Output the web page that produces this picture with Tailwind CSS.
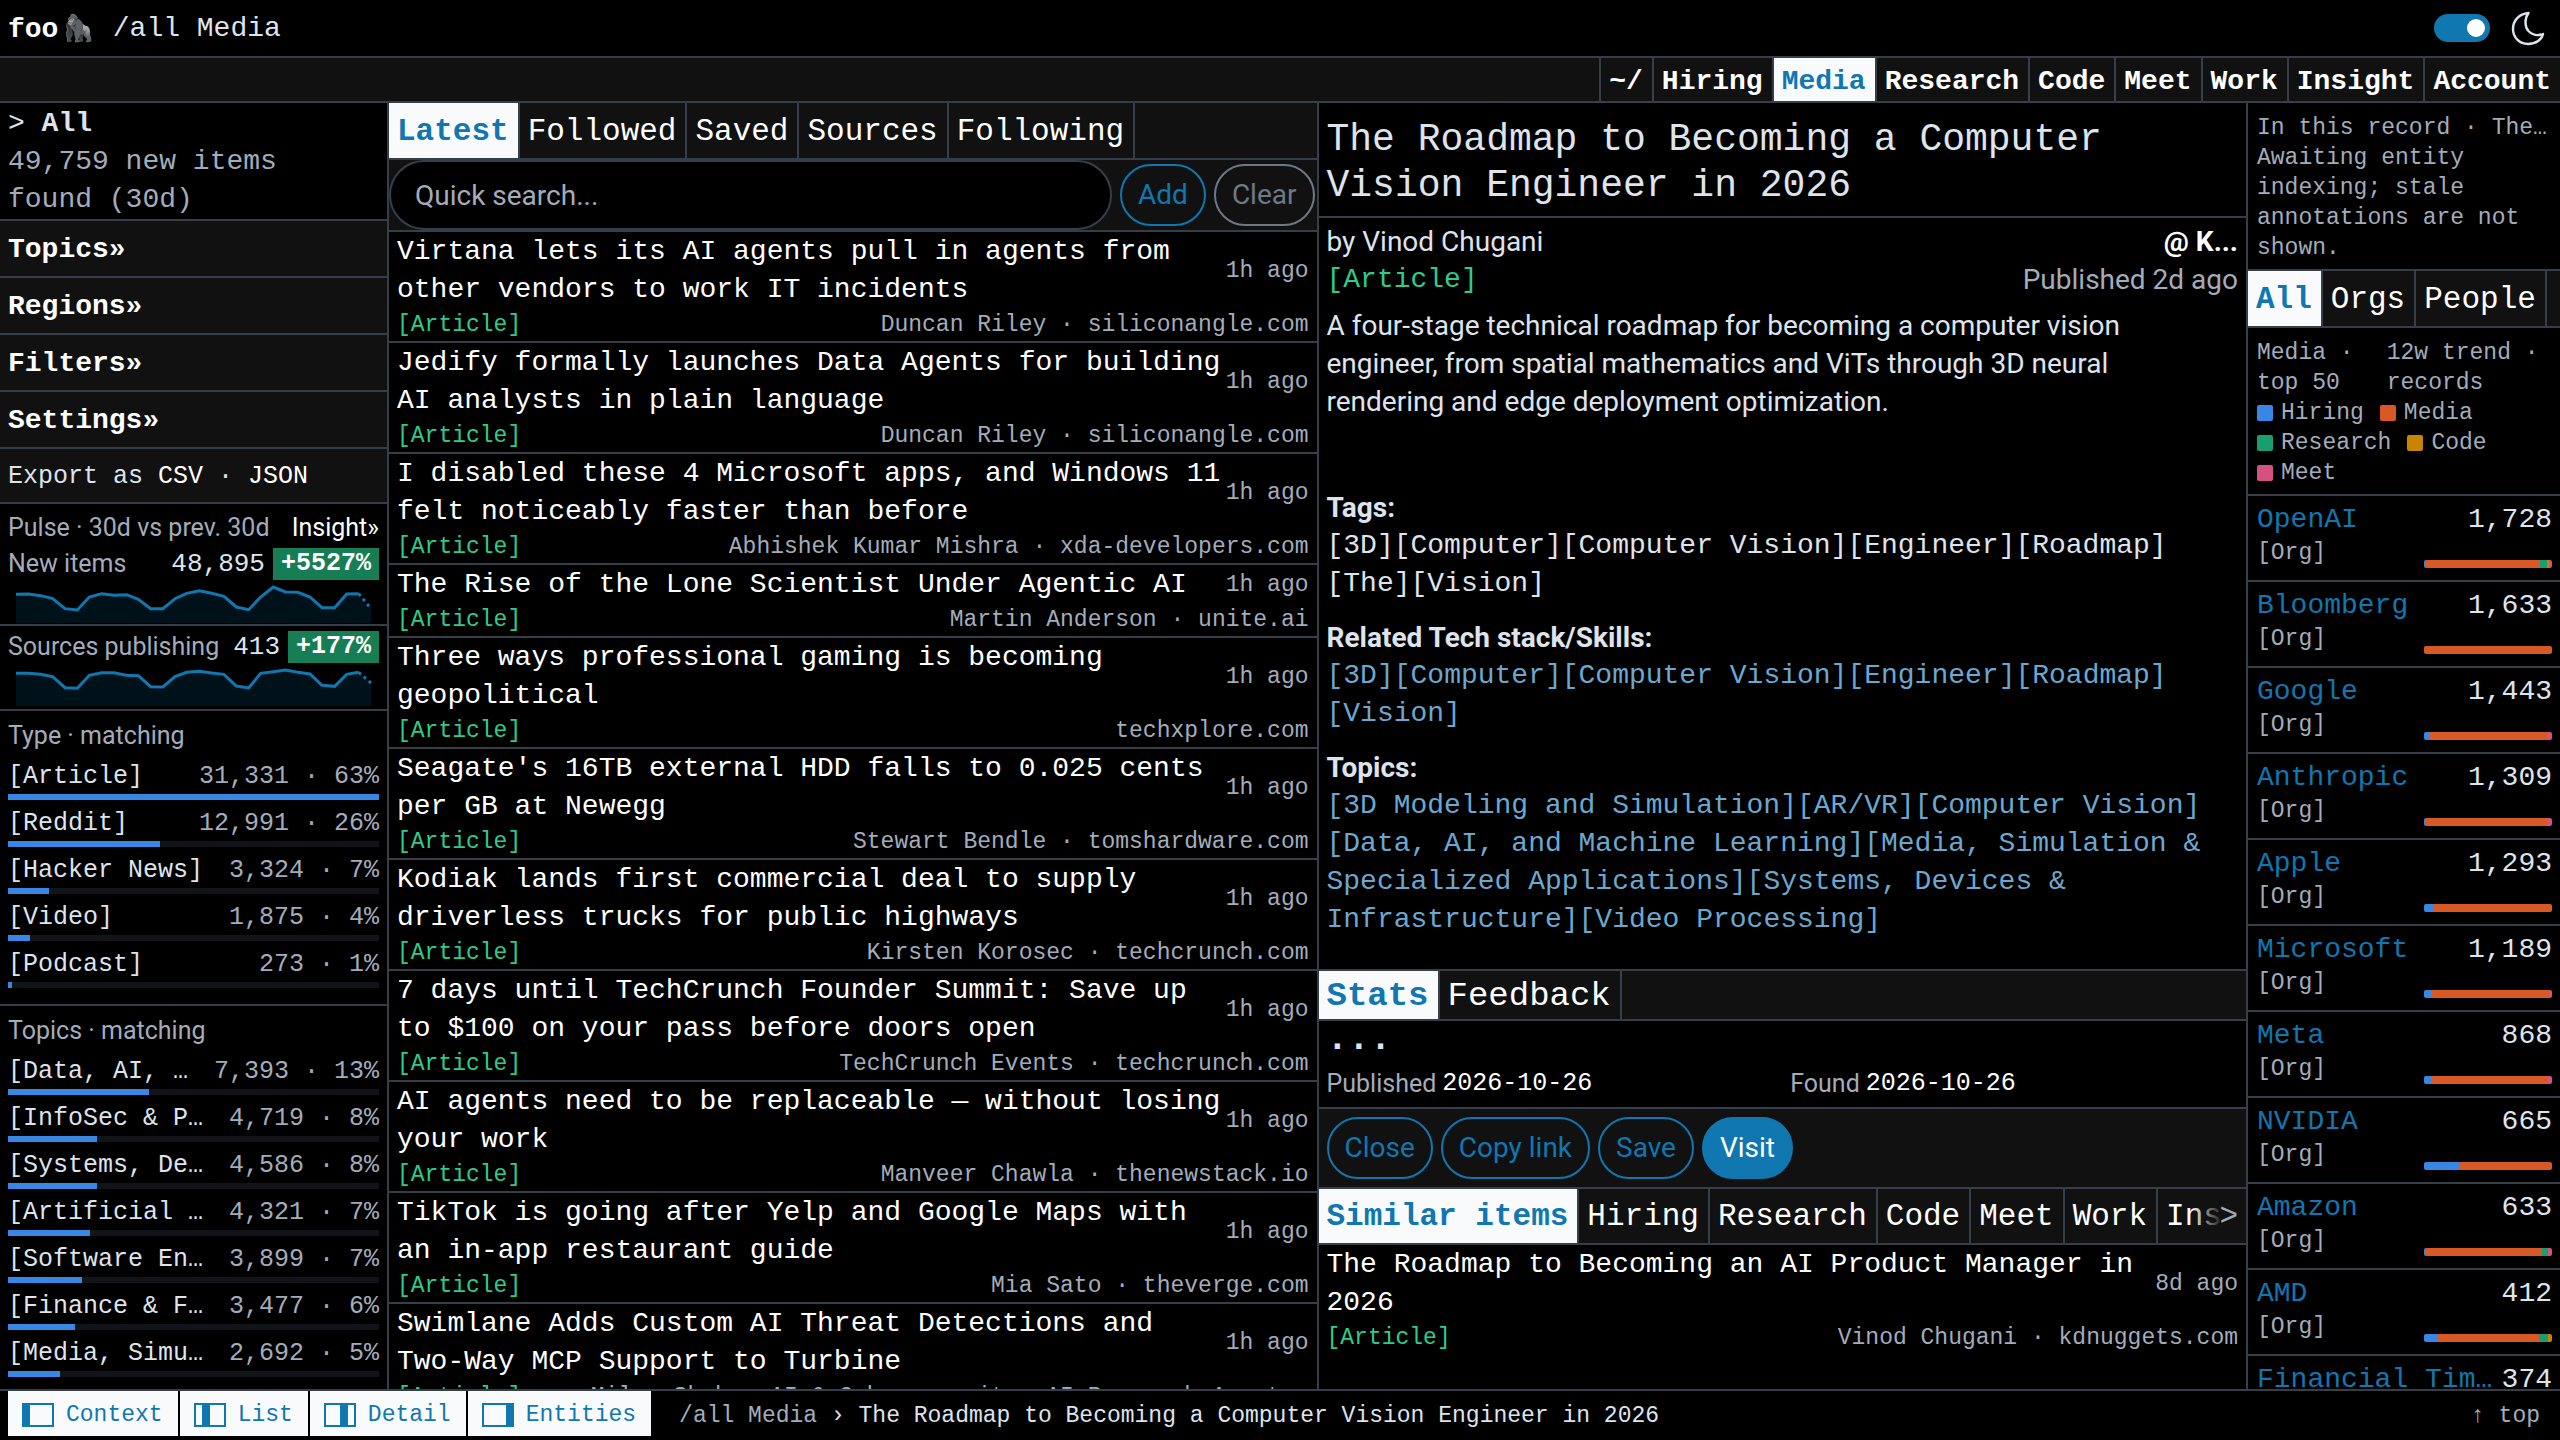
<!DOCTYPE html>
<html lang="en">
<head>
    <meta charset="utf-8">
    <title>foo /all Media</title>
    <script src="https://cdn.jsdelivr.net/npm/@tailwindcss/browser@4"></script>
</head>
<body class="flex h-screen flex-col overflow-hidden bg-black font-['Liberation_Mono',monospace] text-[28px] leading-[38px] text-[#dfe3eb]">

<header class="flex h-[58px] shrink-0 items-center justify-between border-b-2 border-[#363f49] px-2">
    <h1 class="flex items-center gap-[18px] pt-0.5">
        <a href="#" class="font-bold text-white">foo<span class="ml-1 font-['Noto_Color_Emoji',sans-serif] text-[26px]">🦍</span></a>
        <span>/all Media</span>
    </h1>
    <div class="flex items-center gap-5 pr-1.5">
        <input type="checkbox" role="switch" aria-label="Dark mode" checked
               class="flex h-7 w-14 appearance-none items-center justify-end rounded-full bg-[#1077b0] pr-[5px] before:size-[18px] before:rounded-full before:bg-white before:content-['']">
        <svg class="size-9" viewBox="0 0 36 36" fill="none" stroke="#dfe3eb" stroke-width="2.4" stroke-linejoin="round" aria-hidden="true">
            <path d="M18.5 3 C8.5 4 3 11 3 19 C3 27.500 9.500 34 18 34 C26 34 32 29.500 33 24 C28 26 22.500 25 18.500 21 C14.500 16.500 14.500 8.500 18.500 3 Z"/>
        </svg>
    </div>
</header>

<nav class="flex h-[45px] shrink-0 justify-end border-b-2 border-[#363f49] bg-[#111] font-bold leading-[48px] text-white">
    <a href="#" class="border-l-2 border-[#363f49] pl-2 pr-[9px]">~/</a>
    <a href="#" class="border-l-2 border-[#363f49] pl-2 pr-[9px]">Hiring</a>
    <a href="#" class="border-l-2 border-[#363f49] bg-[#f8fafc] pl-2 pr-[9px] text-[#1077b0]">Media</a>
    <a href="#" class="border-l-2 border-[#363f49] pl-2 pr-[9px]">Research</a>
    <a href="#" class="border-l-2 border-[#363f49] pl-2 pr-[9px]">Code</a>
    <a href="#" class="border-l-2 border-[#363f49] pl-2 pr-[9px]">Meet</a>
    <a href="#" class="border-l-2 border-[#363f49] pl-2 pr-[9px]">Work</a>
    <a href="#" class="border-l-2 border-[#363f49] pl-2 pr-[9px]">Insight</a>
    <a href="#" class="border-l-2 border-[#363f49] pl-2 pr-[9px]">Account</a>
</nav>

<main class="grid min-h-0 flex-1 grid-cols-[389px_1fr_1fr_312px]">

    <!-- Context -->
    <aside class="min-w-0 overflow-hidden border-r-2 border-[#363f49]">
        <div class="border-b-2 border-[#363f49] pl-2 pr-6 pt-0.5">
            <p>&gt; <b>All</b></p>
            <p class="text-[#a4acba]">49,759 new items found (30d)</p>
        </div>
        <nav class="bg-[#111] font-bold leading-[52px] text-white">
            <a href="#" class="block border-b-2 border-[#363f49] px-2 pt-[3px]">Topics»</a>
            <a href="#" class="block border-b-2 border-[#363f49] px-2 pt-[3px]">Regions»</a>
            <a href="#" class="block border-b-2 border-[#363f49] px-2 pt-[3px]">Filters»</a>
            <a href="#" class="block border-b-2 border-[#363f49] px-2 pt-[3px]">Settings»</a>
        </nav>
        <p class="border-b-2 border-[#363f49] bg-[#111] px-2 pt-[3px] text-[25px] leading-[50px]">Export as <a href="#" class="text-white">CSV</a> · <a href="#" class="text-white">JSON</a></p>

        <section class="border-b-2 border-[#363f49] px-2 pt-2 text-[25px] leading-8">
            <div class="flex justify-between pb-1">
                <h2 class="font-['Roboto',sans-serif] text-[#a4acba]">Pulse · 30d vs prev. 30d</h2>
                <a href="#" class="font-['Roboto',sans-serif] text-white">Insight»</a>
            </div>
            <div class="flex items-center gap-2">
                <span class="mr-auto font-['Roboto',sans-serif] text-[#a4acba]">New items</span>
                <span class="text-[26px]">48,895</span>
                <span class="bg-[#177d54] px-2 font-bold text-white">+5527%</span>
            </div>
            <svg class="mt-1 block h-10 w-full" viewBox="24 306 1113 120" preserveAspectRatio="none" fill="none" aria-hidden="true">
                <path fill="#001219" d="M48 423V337L85 336 122 341 158 350 195 380 232 384 268 345 305 335 342 340 380 338 415 352 452 380 489 380 525 350 560 334 598 326 635 334 672 343 709 375 746 383 782 345 820 315 856 330 893 331 930 345 966 377 1004 377 1040 336 1076 335 1113 380V423Z"/>
                <path stroke="#1077b0" stroke-width="9" d="M48 337L85 336 122 341 158 350 195 380 232 384 268 345 305 335 342 340 380 338 415 352 452 380 489 380 525 350 560 334 598 326 635 334 672 343 709 375 746 383 782 345 820 315 856 330 893 331 930 345 966 377 1004 377 1040 336 1076 335"/>
                <path stroke="#1077b0" stroke-width="9" stroke-dasharray="9 11" d="M1076 335L1113 380"/>
            </svg>
        </section>
        <section class="border-b-2 border-[#363f49] px-2 pt-[5px] text-[25px] leading-8">
            <div class="flex items-center gap-2">
                <span class="mr-auto font-['Roboto',sans-serif] text-[#a4acba]">Sources publishing</span>
                <span class="text-[26px]">413</span>
                <span class="bg-[#177d54] px-2 font-bold text-white">+177%</span>
            </div>
            <svg class="mt-1 block h-[42px] w-full" viewBox="24 558 1113 126" preserveAspectRatio="none" fill="none" aria-hidden="true">
                <path fill="#001219" d="M48 675V577L85 577 122 580 158 587 195 620 232 622 268 583 305 575 342 575 378 583 415 584 452 617 489 618 525 587 560 574 598 571 635 576 672 580 709 615 746 621 782 577 820 572 856 567 893 574 930 579 966 613 1004 616 1040 580 1076 574 1113 606V675Z"/>
                <path stroke="#1077b0" stroke-width="9" d="M48 577L85 577 122 580 158 587 195 620 232 622 268 583 305 575 342 575 378 583 415 584 452 617 489 618 525 587 560 574 598 571 635 576 672 580 709 615 746 621 782 577 820 572 856 567 893 574 930 579 966 613 1004 616 1040 580 1076 574"/>
                <path stroke="#1077b0" stroke-width="9" stroke-dasharray="9 11" d="M1076 574L1113 606"/>
            </svg>
        </section>

        <section class="border-b-2 border-[#363f49] px-2 pb-4 pt-2">
            <h2 class="font-['Roboto',sans-serif] text-[25px] leading-[34px] text-[#a4acba]">Type · matching</h2>
            <div id="types"></div>
        </section>
        <section class="px-2 pb-4 pt-2">
            <h2 class="font-['Roboto',sans-serif] text-[25px] leading-[34px] text-[#a4acba]">Topics · matching</h2>
            <div id="topics"></div>
        </section>
    </aside>

    <!-- List -->
    <section class="min-w-0 overflow-hidden border-r-2 border-[#363f49]">
        <nav class="flex border-b-2 border-[#363f49] bg-[#111] text-[31px] leading-[52px] text-white">
            <a href="#" class="border-r-2 border-[#363f49] bg-[#f8fafc] pl-2 pr-[9px] pt-[3px] font-bold text-[#1077b0]">Latest</a>
            <a href="#" class="border-r-2 border-[#363f49] pl-2 pr-[9px] pt-[3px]">Followed</a>
            <a href="#" class="border-r-2 border-[#363f49] pl-2 pr-[9px] pt-[3px]">Saved</a>
            <a href="#" class="border-r-2 border-[#363f49] pl-2 pr-[9px] pt-[3px]">Sources</a>
            <a href="#" class="border-r-2 border-[#363f49] pl-2 pr-[9px] pt-[3px]">Following</a>
        </nav>
        <form class="flex h-[72px] items-center gap-2 border-b-2 border-[#363f49] bg-[#111] pr-0.5 font-['Roboto',sans-serif]">
            <input type="search" aria-label="Quick search" placeholder="Quick search..."
                   class="h-full min-w-0 flex-1 rounded-full border-2 border-[#363f49] bg-black px-6 placeholder:text-[#a4acba]">
            <button type="button" class="h-[62px] rounded-full border-2 border-[#1077b0] px-4 text-[#1077b0]">Add</button>
            <button type="reset" class="h-[62px] rounded-full border-2 border-[#6f7887] px-4 text-[#6f7887]">Clear</button>
        </form>
        <ul id="items"></ul>
    </section>

    <!-- Detail -->
    <article class="flex min-w-0 flex-col overflow-hidden border-r-2 border-[#363f49]">
        <h2 class="border-b-2 border-[#363f49] px-2 pb-[7px] pt-[14px] text-[38px] leading-[46px]">The Roadmap to Becoming a Computer Vision Engineer in 2026</h2>
        <div class="flex-1 px-2 pt-[5px]">
            <div class="flex justify-between font-['Roboto',sans-serif]">
                <span>by Vinod Chugani</span>
                <a href="#" class="font-bold text-white">@ K...</a>
            </div>
            <div class="flex justify-between">
                <a href="#" class="text-[#2ecc8b]">[Article]</a>
                <span class="font-['Roboto',sans-serif] text-[#a4acba]">Published 2d ago</span>
            </div>
            <p class="mb-[68px] mt-2 pr-10 font-['Roboto',sans-serif]">A four-stage technical roadmap for becoming a computer vision engineer, from spatial mathematics and ViTs through 3D neural rendering and edge deployment optimization.</p>
            <h3 class="font-['Roboto',sans-serif] font-bold">Tags:</h3>
            <p class="mb-4">[3D][Computer][Computer Vision][Engineer][Roadmap]<wbr>[The][Vision]</p>
            <h3 class="font-['Roboto',sans-serif] font-bold">Related Tech stack/Skills:</h3>
            <p class="mb-4 text-[#6ba8d0]"><a href="#">[3D]</a><a href="#">[Computer]</a><a href="#">[Computer Vision]</a><a href="#">[Engineer]</a><a href="#">[Roadmap]</a><wbr><a href="#">[Vision]</a></p>
            <h3 class="font-['Roboto',sans-serif] font-bold">Topics:</h3>
            <p class="text-[#6ba8d0]"><a href="#">[3D Modeling and Simulation]</a><a href="#">[AR/VR]</a><a href="#">[Computer Vision]</a><wbr><a href="#">[Data, AI, and Machine Learning]</a><a href="#">[Media, Simulation &amp; Specialized Applications]</a><a href="#">[Systems, Devices &amp; Infrastructure]</a><a href="#">[Video Processing]</a></p>
        </div>

        <nav class="flex border-y-2 border-[#363f49] bg-[#111] text-[34px] leading-[46px] text-white">
            <a href="#" class="border-r-2 border-[#363f49] bg-[#f8fafc] pl-2 pr-[9px] pt-0.5 font-bold text-[#1077b0]">Stats</a>
            <a href="#" class="border-r-2 border-[#363f49] pl-2 pr-[9px] pt-0.5">Feedback</a>
        </nav>
        <div class="border-b-2 border-[#363f49] px-2 pb-1.5">
            <p class="mb-2 text-[36px] font-bold">...</p>
            <div class="grid grid-cols-2 gap-4 text-[25px] leading-[34px]">
                <p class="flex gap-1.5"><span class="font-['Roboto',sans-serif] text-[#a4acba]">Published</span><time class="text-white">2026-10-26</time></p>
                <p class="flex gap-1.5"><span class="font-['Roboto',sans-serif] text-[#a4acba]">Found</span><time class="text-white">2026-10-26</time></p>
            </div>
        </div>
        <div class="flex gap-2 border-b-2 border-[#363f49] bg-[#111] p-2 font-['Roboto',sans-serif]">
            <button type="button" class="h-[62px] rounded-full border-2 border-[#1077b0] px-4 text-[#1077b0]">Close</button>
            <button type="button" class="h-[62px] rounded-full border-2 border-[#1077b0] px-4 text-[#1077b0]">Copy link</button>
            <button type="button" class="h-[62px] rounded-full border-2 border-[#1077b0] px-4 text-[#1077b0]">Save</button>
            <button type="button" class="h-[62px] rounded-full border-2 border-[#1077b0] bg-[#1077b0] px-4 text-white">Visit</button>
        </div>
        <nav class="relative flex overflow-hidden border-b-2 border-[#363f49] bg-[#111] text-[31px] leading-[52px] text-white">
            <a href="#" class="shrink-0 border-r-2 border-[#363f49] bg-[#f8fafc] pl-2 pr-[9px] pt-0.5 font-bold text-[#1077b0]">Similar items</a>
            <a href="#" class="border-r-2 border-[#363f49] pl-2 pr-[9px] pt-0.5">Hiring</a>
            <a href="#" class="border-r-2 border-[#363f49] pl-2 pr-[9px] pt-0.5">Research</a>
            <a href="#" class="border-r-2 border-[#363f49] pl-2 pr-[9px] pt-0.5">Code</a>
            <a href="#" class="border-r-2 border-[#363f49] pl-2 pr-[9px] pt-0.5">Meet</a>
            <a href="#" class="border-r-2 border-[#363f49] pl-2 pr-[9px] pt-0.5">Work</a>
            <a href="#" class="pl-2 pt-0.5">Ins</a>
            <button type="button" aria-label="More tabs" class="absolute inset-y-0 right-0 w-14 bg-linear-to-r from-[#111]/0 to-[#111] to-60% pr-2 pt-0.5 text-right text-[#a4acba]">&gt;</button>
        </nav>
        <ul id="similar" class="h-36"></ul>
    </article>

    <!-- Entities -->
    <aside class="min-w-0 overflow-hidden text-[23px] leading-[30px] text-[#a4acba]">
        <div class="border-b-2 border-[#363f49] pl-[9px] pr-2 pb-1.5 pt-2.5">
            <p class="truncate">In this record · The…</p>
            <p>Awaiting entity indexing; stale annotations are not shown.</p>
        </div>
        <nav class="flex border-b-2 border-[#363f49] bg-[#111] text-[31px] leading-[52px] text-white">
            <a href="#" class="border-r-2 border-[#363f49] bg-[#f8fafc] pl-2 pr-[9px] pt-[3px] font-bold text-[#1077b0]">All</a>
            <a href="#" class="border-r-2 border-[#363f49] pl-2 pr-[9px] pt-[3px]">Orgs</a>
            <a href="#" class="border-r-2 border-[#363f49] pl-2 pr-[9px] pt-[3px]">People</a>
        </nav>
        <div class="border-b-2 border-[#363f49] pl-[9px] pr-2 pb-1.5 pt-2.5">
            <div class="flex gap-2"><p>Media · top 50</p><p>12w trend · records</p></div>
            <ul class="flex flex-wrap gap-x-4">
                <li class="flex items-center gap-2"><i class="size-4 rounded-xs bg-[#3987e5]"></i>Hiring</li>
                <li class="flex items-center gap-2"><i class="size-4 rounded-xs bg-[#d95926]"></i>Media</li>
                <li class="flex items-center gap-2"><i class="size-4 rounded-xs bg-[#199e70]"></i>Research</li>
                <li class="flex items-center gap-2"><i class="size-4 rounded-xs bg-[#c98500]"></i>Code</li>
                <li class="flex items-center gap-2"><i class="size-4 rounded-xs bg-[#d55181]"></i>Meet</li>
            </ul>
        </div>
        <ul id="entities"></ul>
    </aside>
</main>

<footer class="flex h-[51px] shrink-0 items-start gap-7 border-t-2 border-[#363f49] pl-2 pr-5 text-[23px] leading-[51px] text-[#a4acba]">
    <div class="flex gap-0.5 leading-[42px] text-[#1077b0]">
        <button type="button" class="flex items-center gap-3 bg-[#f8fafc] pl-[14px] pr-[15px] pt-[3px]"><svg class="h-6 w-8" viewBox="0 0 32 24" fill="#1077b0" aria-hidden="true"><path d="M0 0H32V24H0ZM8 2V22H30V2Z" fill-rule="evenodd"/></svg>Context</button>
        <button type="button" class="flex items-center gap-3 bg-[#f8fafc] pl-[14px] pr-[15px] pt-[3px]"><svg class="h-6 w-8" viewBox="0 0 32 24" fill="#1077b0" aria-hidden="true"><path d="M0 0H32V24H0ZM2 2V22H8V2ZM16 2V22H30V2Z" fill-rule="evenodd"/></svg>List</button>
        <button type="button" class="flex items-center gap-3 bg-[#f8fafc] pl-[14px] pr-[15px] pt-[3px]"><svg class="h-6 w-8" viewBox="0 0 32 24" fill="#1077b0" aria-hidden="true"><path d="M0 0H32V24H0ZM2 2V22H16V2ZM24 2V22H30V2Z" fill-rule="evenodd"/></svg>Detail</button>
        <button type="button" class="flex items-center gap-3 bg-[#f8fafc] pl-[14px] pr-[15px] pt-[3px]"><svg class="h-6 w-8" viewBox="0 0 32 24" fill="#1077b0" aria-hidden="true"><path d="M0 0H32V24H0ZM2 2V22H24V2Z" fill-rule="evenodd"/></svg>Entities</button>
    </div>
    <p class="flex-1 truncate">/all Media <span class="text-[#dfe3eb]">› The Roadmap to Becoming a Computer Vision Engineer in 2026</span></p>
    <a href="#">↑ top</a>
</footer>

<script>
    const types = [
        ["[Article]", "31,331 · 63%", 100],
        ["[Reddit]", "12,991 · 26%", 41],
        ["[Hacker News]", "3,324 · 7%", 11],
        ["[Video]", "1,875 · 4%", 6],
        ["[Podcast]", "273 · 1%", 1]
    ];
    const topics = [
        ["[Data, AI, …", "7,393 · 13%", 38],
        ["[InfoSec & P…", "4,719 · 8%", 24],
        ["[Systems, De…", "4,586 · 8%", 24],
        ["[Artificial …", "4,321 · 7%", 22],
        ["[Software En…", "3,899 · 7%", 20],
        ["[Finance & F…", "3,477 · 6%", 18],
        ["[Media, Simu…", "2,692 · 5%", 14]
    ];
    const items = [
        ["Virtana lets its AI agents pull in agents from other vendors to work IT incidents", "Duncan Riley · siliconangle.com"],
        ["Jedify formally launches Data Agents for building AI analysts in plain language", "Duncan Riley · siliconangle.com"],
        ["I disabled these 4 Microsoft apps, and Windows 11 felt noticeably faster than before", "Abhishek Kumar Mishra · xda-developers.com"],
        ["The Rise of the Lone Scientist Under Agentic AI", "Martin Anderson · unite.ai"],
        ["Three ways professional gaming is becoming geopolitical", "techxplore.com"],
        ["Seagate's 16TB external HDD falls to 0.025 cents per GB at Newegg", "Stewart Bendle · tomshardware.com"],
        ["Kodiak lands first commercial deal to supply driverless trucks for public highways", "Kirsten Korosec · techcrunch.com"],
        ["7 days until TechCrunch Founder Summit: Save up to $100 on your pass before doors open", "TechCrunch Events · techcrunch.com"],
        ["AI agents need to be replaceable — without losing your work", "Manveer Chawla · thenewstack.io"],
        ["TikTok is going after Yelp and Google Maps with an in-app restaurant guide", "Mia Sato · theverge.com"],
        ["Swimlane Adds Custom AI Threat Detections and Two-Way MCP Support to Turbine", "Milan Shah · AI & Cybersecurity, AI Research Agents…"]
    ];
    // name, records, then the share of Hiring, Media, Research, Code and Meet
    const entities = [
        ["OpenAI", "1,728", [1, 90, 5, 2, 2]],
        ["Bloomberg", "1,633", [0, 100, 0, 0, 0]],
        ["Google", "1,443", [5, 91, 0, 0, 4]],
        ["Anthropic", "1,309", [1, 95, 0, 0, 4]],
        ["Apple", "1,293", [8, 91, 0, 0, 1]],
        ["Microsoft", "1,189", [6, 92, 0, 0, 2]],
        ["Meta", "868", [6, 91, 0, 0, 3]],
        ["NVIDIA", "665", [27, 73, 0, 0, 0]],
        ["Amazon", "633", [1, 91, 5, 0, 3]],
        ["AMD", "412", [10, 80, 7, 3, 0]],
        ["Financial Tim…", "374", [1, 99, 0, 0, 0]]
    ];
    const colors = ["bg-[#3987e5]", "bg-[#d95926]", "bg-[#199e70]", "bg-[#c98500]", "bg-[#d55181]"];

    function facet([name, count, width]) {
        return `<div class="pt-1.5 text-[25px] leading-[35px]">
            <a href="#" class="flex justify-between gap-2"><span class="truncate">${name}</span><span class="shrink-0 text-[#a4acba]">${count}</span></a>
            <div class="h-1.5 bg-[#111418]"><div class="h-full bg-[#3987e5]" style="width:${width}%"></div></div>
        </div>`;
    }

    function item([title, source], age) {
        return `<li class="border-b-2 border-[#363f49] px-2 pt-px last:border-b-0">
            <div class="flex items-center justify-between gap-1"><a href="#" class="text-white">${title}</a><time class="shrink-0 text-[23px] text-[#a4acba]">${age}</time></div>
            <div class="flex justify-between gap-4 text-[23px] leading-8"><a href="#" class="text-[#2ecc8b]">[Article]</a><span class="truncate text-[#a4acba]">${source}</span></div>
        </li>`;
    }

    function entity([name, count, shares]) {
        const bars = shares.map((s, i) => s ? `<i class="${colors[i]}" style="width:${s}%"></i>` : "").join("");
        return `<li class="border-b-2 border-[#363f49] pb-3 pl-[9px] pr-2 pt-[5px]">
            <div class="flex justify-between gap-1 text-[28px] leading-[38px]"><a href="#" class="truncate text-[#1077b0]">${name}</a><span class="shrink-0 text-[#dfe3eb]">${count}</span></div>
            <div class="flex items-end justify-between leading-[29px]"><span>[Org]</span><div class="flex h-2 w-32 overflow-hidden rounded-xs">${bars}</div></div>
        </li>`;
    }

    document.getElementById("types").innerHTML = types.map(facet).join("");
    document.getElementById("topics").innerHTML = topics.map(facet).join("");
    document.getElementById("items").innerHTML = items.map(i => item(i, "1h ago")).join("");
    document.getElementById("similar").innerHTML = item(["The Roadmap to Becoming an AI Product Manager in 2026", "Vinod Chugani · kdnuggets.com"], "8d ago");
    document.getElementById("entities").innerHTML = entities.map(entity).join("");
</script>
</body>
</html>
